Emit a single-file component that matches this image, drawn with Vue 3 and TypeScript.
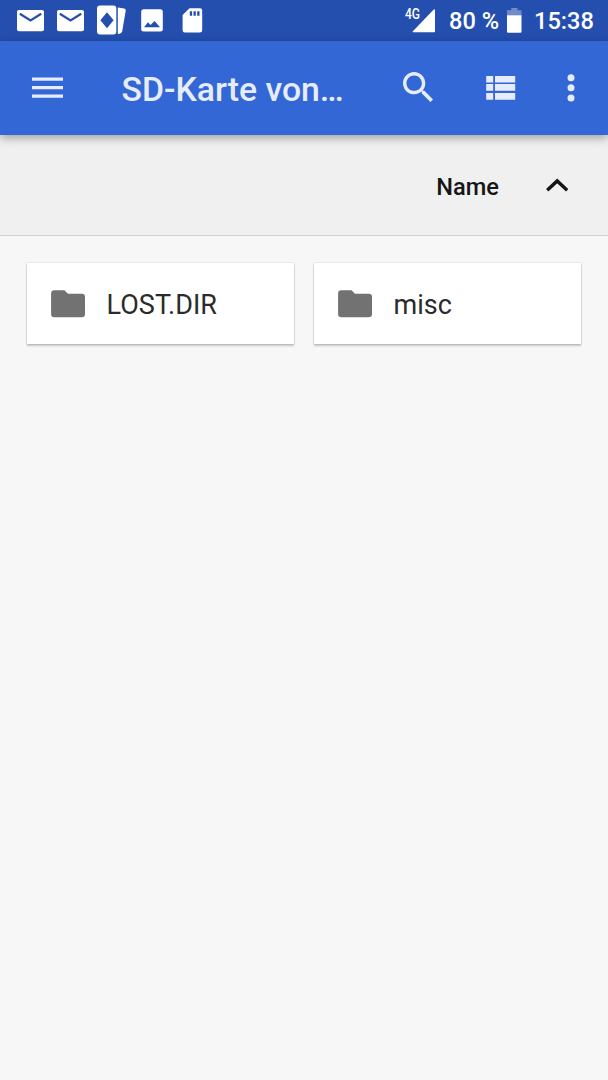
<script setup lang="ts">
interface Folder {
  id: number
  name: string
}

const folders: Folder[] = [
  { id: 1, name: 'LOST.DIR' },
  { id: 2, name: 'misc' },
]
const title = 'SD-Karte von…'
const mailIcons = [1, 2]
</script>

<template>
  <div class="screen">
    <header class="status">
      <div class="notifications">
        <svg v-for="n in mailIcons" :key="n" class="mail" width="27" height="22" viewBox="0 0 27 22">
          <rect y="0" width="27" height="21.3" rx="2" fill="#fff" />
          <path d="M2.8 3.8 13.5 10.4 24.2 3.8" fill="none" stroke="#244fae" stroke-width="2.2" />
        </svg>
        <svg class="cards" width="30" height="30" viewBox="0 0 30 30">
          <rect x="0" y="0.5" width="19.3" height="29" rx="3" fill="#fff" />
          <path d="M10 7.2 16.6 15.2 10 23.2 3.4 15.2Z" fill="#244fae" />
          <path d="M20.8 2.5 27.2 3.5Q29 3.9 28.7 5.7L25.2 26.3Q24.8 28.3 22.8 28.7L20.8 29Z" fill="#fff" />
        </svg>
        <svg class="picture" width="22" height="23" viewBox="0 0 22 23">
          <rect x="0.2" y="0.2" width="21.6" height="22.3" rx="2.5" fill="#fff" />
          <path d="M3 18.3 7 13.2 9.5 16 13.6 11.9 19 18.3Z" fill="#244fae" />
        </svg>
        <svg class="sdcard" width="21" height="25" viewBox="0 0 21 25">
          <path d="M7.5 0.3H18Q20.2.3 20.2 2.7V22Q20.2 24.5 17.9 24.5H2.9Q.6 24.5.6 22V7Z" fill="#fff" />
          <path d="M7.8 3.2h2.3v4.6H7.8zM11.5 3.2h2.3v4.6h-2.3zM15.2 3.2h2.3v4.6h-2.3z" fill="#244fae" />
        </svg>
      </div>
      <div class="system">
        <div class="network">
          <svg width="25" height="24" viewBox="0 0 25 24"><path d="M22.5 .8Q24-.4 24 1V22.2Q24 23.2 23 23.2H2.4Q1 23.2 1.9 22.2Z" fill="#fff" /></svg>
          <span>4G</span>
        </div>
        <span class="percent">80 %</span>
        <svg class="battery" width="15" height="25" viewBox="0 0 15 25">
          <path d="M4.2 0h6.3v2.3H14.5V7.5H0V2.3H4.2z" fill="#6f8bc9" />
          <path d="M0 7.2h14.5V23.6Q14.5 24.8 13.3 24.8H1.2Q0 24.8 0 23.6Z" fill="#fff" />
        </svg>
        <span class="clock">15:38</span>
      </div>
    </header>

    <nav class="toolbar">
      <button class="menu" aria-label="Menu">
        <svg width="31" height="22" viewBox="0 0 31 22" fill="#e6ecfa"><path d="M0 .5h31v3.3H0zM0 9h31v3.3H0zM0 17.4h31v3.4H0z" /></svg>
      </button>
      <h1>{{ title }}</h1>
      <button class="search" aria-label="Search">
        <svg width="30" height="30" viewBox="3 3 17.49 17.49" fill="#e6ecfa">
          <path d="M15.5 14h-.79l-.28-.27C15.41 12.59 16 11.11 16 9.5 16 5.91 13.09 3 9.5 3S3 5.91 3 9.5 5.91 16 9.5 16c1.61 0 3.09-.59 4.23-1.57l.27.28v.79l5 4.99L20.49 19l-4.99-5zm-6 0C7.01 14 5 11.99 5 9.5S7.01 5 9.5 5 14 7.01 14 9.5 11.99 14 9.5 14z" />
        </svg>
      </button>
      <button class="list" aria-label="List view">
        <svg width="30" height="25" viewBox="0 0 30 25" fill="#e6ecfa">
          <path d="M.2 .9h7v6.6h-7zM9 .9h20.2v6.6H9zM.2 9.1h7v6.7h-7zM9 9.1h20.2v6.7H9zM.2 18h7v6.7h-7zM9 18h20.2v6.7H9z" />
        </svg>
      </button>
      <button class="more" aria-label="More options">
        <svg width="8" height="29" viewBox="0 0 8 29" fill="#e6ecfa"><circle cx="4" cy="3.7" r="3.5" /><circle cx="4" cy="13.8" r="3.5" /><circle cx="4" cy="24" r="3.5" /></svg>
      </button>
    </nav>

    <div class="sort">
      <span>Name</span>
      <svg width="22" height="14" viewBox="0 0 22 14"><path d="M1.2 12.3 11.2 2.9 21.2 12.3" fill="none" stroke="#161616" stroke-width="3.4" /></svg>
    </div>

    <main class="grid">
      <article v-for="folder in folders" :key="folder.id" class="card">
        <svg width="34" height="28" viewBox="0 0 34 28">
          <path d="M3.3.3H13.5L17 3.7H30.8Q34 3.7 34 7V24Q34 27.2 30.8 27.2H3.3Q.1 27.2.1 24V3.6Q.1.3 3.3.3Z" fill="#727272" />
        </svg>
        <span>{{ folder.name }}</span>
      </article>
    </main>
  </div>
</template>

<style>
body {
  background: #f7f7f7;
}
</style>

<style scoped>
.screen {
  width: 608px;
  height: 1080px;
  overflow: hidden;
  background: #f7f7f7;
  font-family: Roboto, 'Noto Sans', sans-serif;
}
svg {
  display: block;
  flex: none;
}
.status {
  display: flex;
  justify-content: space-between;
  height: 41px;
  box-sizing: border-box;
  background: #244fae;
  color: #fff;
}
.notifications {
  display: flex;
  align-items: flex-start;
  padding-left: 17px;
}
.mail {
  margin: 10px 13.4px 0 0;
}
.cards {
  margin: 5px 0 0 -0.8px;
}
.picture {
  margin: 9px 0 0 14px;
}
.sdcard {
  margin: 8px 0 0 19px;
}
.system {
  display: flex;
  align-items: flex-start;
  font-size: 23.6px;
  font-weight: 500;
  line-height: 28px;
}
.network {
  position: relative;
  width: 31px;
  margin-right: 14px;
}
.network svg {
  margin: 9px 0 0 7px;
}
.network span {
  position: absolute;
  left: 1px;
  top: 7px;
  font-size: 14px;
  line-height: 15px;
  transform: scaleX(0.86);
  transform-origin: left;
}
.percent {
  width: 58px;
  margin-top: 7px;
  white-space: nowrap;
}
.battery {
  margin-top: 8px;
}
.clock {
  width: 74px;
  margin: 7px 0 0 12px;
}
.toolbar {
  position: relative;
  display: flex;
  align-items: flex-start;
  height: 94px;
  background: #3367d6;
  box-shadow: 0 3px 9px rgba(0, 0, 0, 0.34);
}
button {
  padding: 0;
  border: 0;
  background: none;
}
.menu {
  margin: 36px 0 0 32px;
}
h1 {
  width: 281.5px;
  margin: 29px 0 0 58.5px;
  color: #e6ecfa;
  font-size: 33.75px;
  font-weight: 500;
  line-height: 40px;
  white-space: nowrap;
}
.search {
  margin: 31px 0 0 0.4px;
}
.list {
  margin: 34px 0 0 52.6px;
}
.more {
  margin: 33px 0 0 51px;
}
.sort {
  display: flex;
  align-items: center;
  justify-content: flex-end;
  gap: 47px;
  height: 101px;
  box-sizing: border-box;
  padding: 3px 40px 0 0;
  border-bottom: 1px solid #d2d2d2;
  background: #f0f0f0;
  color: #161616;
  font-size: 23.6px;
  font-weight: 500;
}
.sort svg {
  margin-top: -3px;
}
.grid {
  display: grid;
  grid-template-columns: 267px 267px;
  gap: 20px;
  padding: 27px 0 0 27px;
}
.card {
  display: flex;
  align-items: center;
  gap: 22px;
  height: 81px;
  box-sizing: border-box;
  padding-left: 23.6px;
  background: #fff;
  box-shadow: 0 0 1px rgba(0, 0, 0, 0.35), 0 1.5px 2px rgba(0, 0, 0, 0.2);
  color: #2b2b2b;
  font-size: 27px;
}
.card span {
  margin-top: 2px;
}
</style>
